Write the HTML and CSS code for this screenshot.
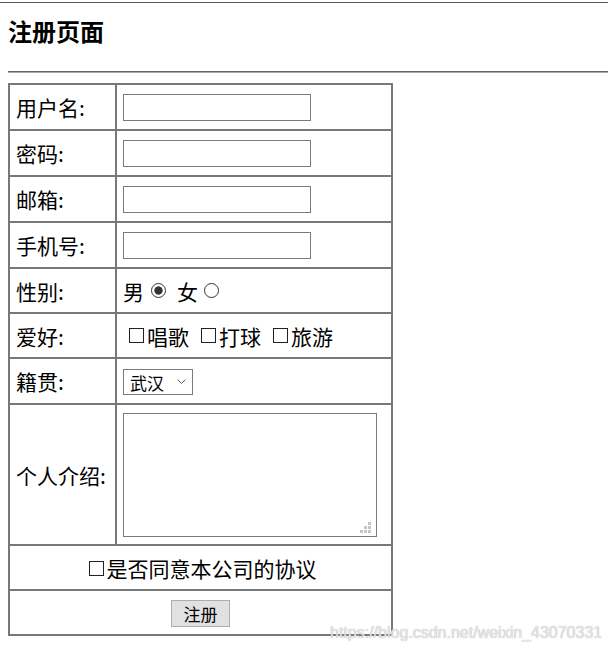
FILE: index.html
```html
<!DOCTYPE html>
<html lang="zh-CN">
<head>
    <meta charset="UTF-8">
    <title>注册页面</title>
    <link rel="stylesheet" href="styles.css">
</head>
<body>

    <div class="topline"></div>

    <div class="page">
        <h2 class="title">注册页面</h2>
        <hr class="rule">

        <form>
            <table class="reg">
                <tr>
                    <td class="label">用户名:</td>
                    <td class="field"><input type="text" class="txt"></td>
                </tr>
                <tr>
                    <td class="label">密码:</td>
                    <td class="field"><input type="password" class="txt"></td>
                </tr>
                <tr>
                    <td class="label">邮箱:</td>
                    <td class="field"><input type="text" class="txt"></td>
                </tr>
                <tr>
                    <td class="label">手机号:</td>
                    <td class="field"><input type="text" class="txt"></td>
                </tr>
                <tr class="short">
                    <td class="label">性别:</td>
                    <td class="field">
                        <div class="sex">
                            <span>男</span>
                            <input type="radio" name="sex" class="radio r-man" checked>
                            <span class="w-lbl">女</span>
                            <input type="radio" name="sex" class="radio r-woman">
                        </div>
                    </td>
                </tr>
                <tr class="short">
                    <td class="label">爱好:</td>
                    <td class="field">
                        <div class="hobby">
                            <label class="opt"><input type="checkbox" class="check">唱歌</label>
                            <label class="opt"><input type="checkbox" class="check">打球</label>
                            <label class="opt"><input type="checkbox" class="check">旅游</label>
                        </div>
                    </td>
                </tr>
                <tr>
                    <td class="label">籍贯:</td>
                    <td class="field">
                        <span class="sel-wrap">
                            <select class="sel">
                                <option>武汉</option>
                                <option>北京</option>
                                <option>上海</option>
                            </select>
                            <svg class="chev" width="9" height="6" viewBox="0 0 9 6"><polyline points="0.5,0.5 4.5,4.5 8.5,0.5" fill="none" stroke="#606060" stroke-width="1"/></svg>
                        </span>
                    </td>
                </tr>
                <tr class="tall">
                    <td class="label">个人介绍:</td>
                    <td class="field">
                        <div class="area-wrap">
                            <textarea class="area"></textarea>
                            <svg class="grip" width="11" height="11" viewBox="0 0 11 11">
                                <rect x="8" y="0" width="3" height="3" fill="#c4c4c4"/>
                                <rect x="4" y="4" width="3" height="3" fill="#c4c4c4"/>
                                <rect x="8" y="4" width="3" height="3" fill="#c4c4c4"/>
                                <rect x="0" y="8" width="3" height="3" fill="#c4c4c4"/>
                                <rect x="4" y="8" width="3" height="3" fill="#c4c4c4"/>
                                <rect x="8" y="8" width="3" height="3" fill="#c4c4c4"/>
                            </svg>
                        </div>
                    </td>
                </tr>
                <tr class="short">
                    <td colspan="2" class="center">
                        <label class="agree"><input type="checkbox" class="check">是否同意本公司的协议</label>
                    </td>
                </tr>
                <tr class="short">
                    <td colspan="2" class="center">
                        <button type="submit" class="btn">注册</button>
                    </td>
                </tr>
            </table>
        </form>
    </div>

    <div class="watermark">https://blog.csdn.net/weixin_43070331</div>

</body>
</html>
```

FILE: styles.css
```css
/* Page base */
html, body {
    margin: 0;
    padding: 0;
    background-color: white;
    color: black;
    font-family: "Noto Sans CJK SC", "Microsoft YaHei", sans-serif;
}
.topline {
    margin-top: 2px;
    border-top: 1px solid #555a69;
}
.page {
    padding: 0 8px;
}
.title {
    margin: 12px 0 24px;
    font-size: 24px;
    line-height: 32px;
    font-weight: bold;
}
.rule {
    height: 0;
    margin: 0 -8px 10px 0;
    border: 0;
    border-top: 1px solid #646464;
    border-bottom: 1px solid #a8a8a8;
}

/* Table */
.reg {
    width: 385px;
    table-layout: fixed;
    border-collapse: separate;
    border-spacing: 0;
    border: 1px solid #787878;
    font-size: 21px;
}
.reg td {
    box-sizing: border-box;
    height: 46px;
    padding: 0 6px;
    border: 1px solid #787878;
    line-height: 24px;
    vertical-align: middle;
}
.reg .label {
    width: 107px;
}
.reg .short td {
    height: 45px;
}
.reg .tall td {
    height: 141px;
}
.reg .center {
    text-align: center;
}

/* Text inputs */
.txt {
    display: block;
    box-sizing: border-box;
    width: 188px;
    height: 27px;
    margin: 0;
    padding: 0 4px;
    border: 1px solid #7a7a7a;
    font-size: 16px;
    outline: none;
}

/* Radios */
.sex {
    display: flex;
    align-items: center;
}
.radio {
    appearance: none;
    -webkit-appearance: none;
    box-sizing: border-box;
    width: 15px;
    height: 15px;
    margin: 0;
    border: 1px solid #333;
    border-radius: 50%;
    background-color: white;
}
.radio:checked {
    background: radial-gradient(circle, #333 0 3.8px, white 4.5px);
}
.r-man {
    margin-left: 7px;
}
.w-lbl {
    margin-left: 11px;
}
.r-woman {
    margin-left: 6px;
}

/* Checkboxes */
.check {
    appearance: none;
    -webkit-appearance: none;
    box-sizing: border-box;
    width: 15px;
    height: 15px;
    margin: 0 3px 0 0;
    border: 1px solid #222;
    border-radius: 0;
    background-color: white;
}
.hobby {
    display: flex;
    align-items: center;
    padding-left: 6px;
}
.opt {
    display: inline-flex;
    align-items: center;
    margin-right: 12px;
}
.agree {
    display: inline-flex;
    align-items: center;
    margin-left: 4px;
}

/* Select */
.sel-wrap {
    position: relative;
    display: inline-block;
    vertical-align: middle;
}
.sel {
    appearance: none;
    -webkit-appearance: none;
    display: block;
    box-sizing: border-box;
    width: 70px;
    height: 26px;
    margin: 0;
    padding: 0 0 0 6px;
    border: 1px solid #7a7a7a;
    border-radius: 0;
    background-color: white;
    color: black;
    font-family: inherit;
    font-size: 17px;
    outline: none;
}
.chev {
    position: absolute;
    right: 7px;
    top: 10px;
    pointer-events: none;
}

/* Textarea */
.area-wrap {
    position: relative;
    width: 254px;
    height: 124px;
}
.area {
    display: block;
    box-sizing: border-box;
    width: 254px;
    height: 124px;
    margin: 0;
    border: 1px solid #7a7a7a;
    resize: none;
    outline: none;
}
.grip {
    position: absolute;
    right: 6px;
    bottom: 4px;
}

/* Submit button */
.btn {
    box-sizing: border-box;
    width: 59px;
    height: 27px;
    padding: 0;
    border: 1px solid #adadad;
    background-color: #e1e1e1;
    color: black;
    font-family: inherit;
    font-size: 17px;
    vertical-align: middle;
}

/* Blog watermark over the bottom corner */
.watermark {
    position: absolute;
    left: 330px;
    top: 624px;
    font-family: "Liberation Sans", Arial, sans-serif;
    font-size: 16px;
    color: #e6e6e6;
    text-shadow: 0 0 1px #a8a8a8;
}
```
